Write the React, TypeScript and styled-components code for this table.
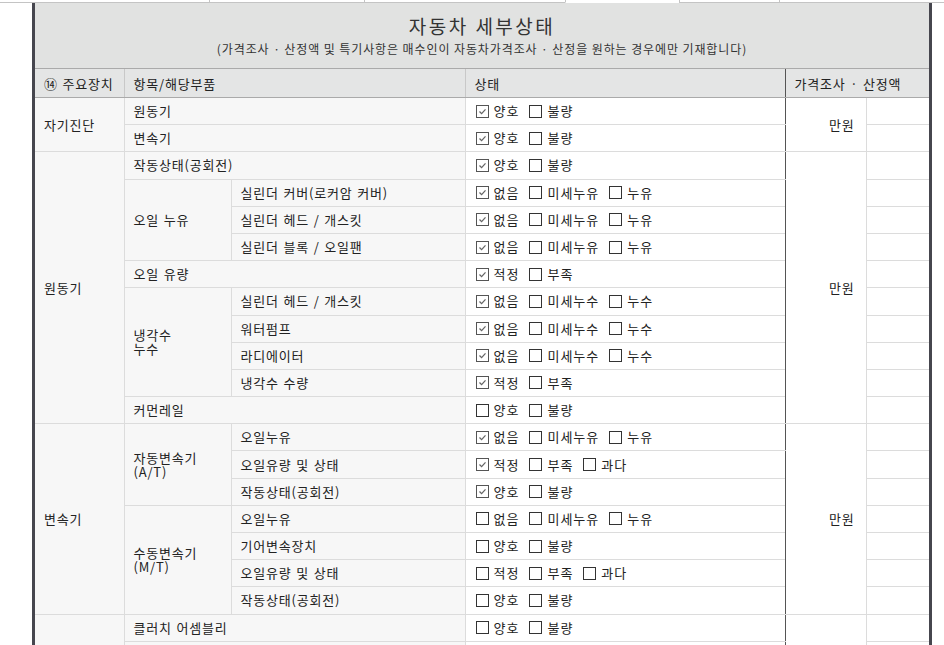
import React from "react";
import styled, { createGlobalStyle } from "styled-components";

const GlobalStyle = createGlobalStyle`
  html, body {
    margin: 0;
    padding: 0;
    background: #fff;
  }
  body {
    font-family: "Noto Sans CJK KR", "Noto Sans", sans-serif;
    color: #222;
  }
`;

type Opt = [string, boolean];
type Row = {
  cat?: { label: string; span: number };
  sub?: { label: React.ReactNode; span: number; full?: boolean };
  item?: string;
  opts: Opt[];
  price?: number;
};

const good = (c: boolean): Opt[] => [["양호", c], ["불량", false]];
const leakOil = (c: boolean): Opt[] => [["없음", c], ["미세누유", false], ["누유", false]];
const leakWater = (c: boolean): Opt[] => [["없음", c], ["미세누수", false], ["누수", false]];
const level = (c: boolean): Opt[] => [["적정", c], ["부족", false]];
const level3 = (c: boolean): Opt[] => [["적정", c], ["부족", false], ["과다", false]];

const rows: Row[] = [
  { cat: { label: "자기진단", span: 2 }, sub: { label: "원동기", span: 1, full: true }, opts: good(true), price: 2 },
  { sub: { label: "변속기", span: 1, full: true }, opts: good(true) },
  { cat: { label: "원동기", span: 10 }, sub: { label: "작동상태(공회전)", span: 1, full: true }, opts: good(true), price: 10 },
  { sub: { label: "오일 누유", span: 3 }, item: "실린더 커버(로커암 커버)", opts: leakOil(true) },
  { item: "실린더 헤드 / 개스킷", opts: leakOil(true) },
  { item: "실린더 블록 / 오일팬", opts: leakOil(true) },
  { sub: { label: "오일 유량", span: 1, full: true }, opts: level(true) },
  { sub: { label: <>냉각수<br />누수</>, span: 4 }, item: "실린더 헤드 / 개스킷", opts: leakWater(true) },
  { item: "워터펌프", opts: leakWater(true) },
  { item: "라디에이터", opts: leakWater(true) },
  { item: "냉각수 수량", opts: level(true) },
  { sub: { label: "커먼레일", span: 1, full: true }, opts: good(false) },
  { cat: { label: "변속기", span: 7 }, sub: { label: <>자동변속기<br />(A/T)</>, span: 3 }, item: "오일누유", opts: leakOil(true), price: 7 },
  { item: "오일유량 및 상태", opts: level3(true) },
  { item: "작동상태(공회전)", opts: good(true) },
  { sub: { label: <>수동변속기<br />(M/T)</>, span: 4 }, item: "오일누유", opts: leakOil(false) },
  { item: "기어변속장치", opts: good(false) },
  { item: "오일유량 및 상태", opts: level3(false) },
  { item: "작동상태(공회전)", opts: good(false) },
  { cat: { label: "동력전달", span: 4 }, sub: { label: "클러치 어셈블리", span: 1, full: true }, opts: good(false), price: 4 },
  { sub: { label: "등속조인트", span: 1, full: true }, opts: good(false) },
  { sub: { label: "추진축 및 베어링", span: 1, full: true }, opts: good(false) },
  { sub: { label: "디퍼렌셜 기어", span: 1, full: true }, opts: good(false) },
];

const tabs = [
  { w: 209 },
  { w: 155 },
  { w: 201 },
  { w: 114, active: true },
  { w: 100 },
  { w: 165 },
];

const Page = styled.div`
  width: 944px;
`;

const TabStrip = styled.div`
  display: flex;
  height: 3px;
`;

const Tab = styled.div<{ $w: number; $active?: boolean }>`
  box-sizing: border-box;
  flex: 0 0 ${(p) => p.$w}px;
  height: 3px;
  border-left: 1px solid #c4c4c4;
  border-bottom: 1px solid ${(p) => (p.$active ? "transparent" : "#c4c4c4")};
  background: #fff;
  &:first-child {
    border-left: none;
  }
`;

const Body = styled.div`
  padding-left: 32px;
`;

const Sheet = styled.div`
  box-sizing: border-box;
  width: 900px;
  border-left: 3px solid #46464e;
  border-right: 3px solid #46464e;
`;

const TitleBox = styled.div`
  height: 65px;
  background: #e1e2e1;
  display: flex;
  flex-direction: column;
  align-items: center;
  justify-content: center;
  gap: 3px;
  color: #333;
`;

const Title = styled.div`
  font-size: 19px;
  letter-spacing: 2.5px;
  line-height: 24px;
`;

const Sub = styled.div`
  font-size: 12px;
  letter-spacing: 0.9px;
  line-height: 16px;
`;

const Table = styled.table`
  width: 100%;
  border-collapse: collapse;
  table-layout: fixed;
  font-size: 13px;
  letter-spacing: 0.8px;
  word-spacing: 1px;
`;

const HeadCell = styled.th<{ $dark?: boolean }>`
  box-sizing: border-box;
  height: 29px;
  padding: 0 0 0 9px;
  background: #e4e5e5;
  text-align: left;
  font-weight: normal;
  color: #222;
  border-top: 1px solid #aaa;
  border-bottom: 1px solid #aaa;
  border-left: 1px solid ${(p) => (p.$dark ? "#555" : "#c8c8c8")};
  &:first-child {
    border-left: none;
  }
`;

const Cell = styled.td<{ $tight?: boolean }>`
  box-sizing: border-box;
  height: 27.2px;
  padding: 0 0 0 9px;
  background: #f7f7f7;
  border: 1px solid #dcdcdc;
  line-height: ${(p) => (p.$tight ? "14px" : "18px")};
  vertical-align: middle;
  white-space: nowrap;
  &:first-child {
    border-left: none;
  }
`;

const StateCell = styled.td`
  box-sizing: border-box;
  height: 27.2px;
  padding: 0 0 0 10px;
  background: #fff;
  border: 1px solid #dcdcdc;
  border-right: 1px solid #555;
`;

const PriceCell = styled.td`
  box-sizing: border-box;
  padding: 0 11px 0 0;
  background: #fff;
  border: 1px solid #dcdcdc;
  border-left: 1px solid #555;
  text-align: right;
  vertical-align: middle;
`;

const BlankCell = styled.td`
  box-sizing: border-box;
  height: 27.2px;
  background: #fff;
  border: 1px solid #dcdcdc;
  border-right: none;
`;

const Opts = styled.div`
  display: flex;
  align-items: center;
  gap: 10px;
  letter-spacing: 1px;
`;

const OptItem = styled.label`
  display: inline-flex;
  align-items: center;
  gap: 5px;
  line-height: 18px;
`;

const Box = styled.span<{ $on: boolean }>`
  box-sizing: border-box;
  display: inline-flex;
  align-items: center;
  justify-content: center;
  width: 13px;
  height: 13px;
  border: 1px solid ${(p) => (p.$on ? "#555" : "#333")};
  background: #fff;
`;

function Check({ on }: { on: boolean }) {
  return (
    <Box $on={on}>
      {on && (
        <svg width="11" height="11" viewBox="0 0 11 11">
          <path d="M2.5 5.5 L4.6 7.6 L8.5 3.4" fill="none" stroke="#666" strokeWidth="1.3" />
        </svg>
      )}
    </Box>
  );
}

export default function App() {
  return (
    <Page>
      <GlobalStyle />
      <TabStrip>
        {tabs.map((t, i) => (
          <Tab key={i} $w={t.w} $active={t.active} />
        ))}
      </TabStrip>
      <Body>
        <Sheet>
          <TitleBox>
            <Title>자동차 세부상태</Title>
            <Sub>(가격조사 · 산정액 및 특기사항은 매수인이 자동차가격조사 · 산정을 원하는 경우에만 기재합니다)</Sub>
          </TitleBox>
          <Table>
            <colgroup>
              <col style={{ width: 89 }} />
              <col style={{ width: 107 }} />
              <col style={{ width: 234 }} />
              <col style={{ width: 320 }} />
              <col style={{ width: 81 }} />
              <col style={{ width: 63 }} />
            </colgroup>
            <thead>
              <tr>
                <HeadCell>⑭ 주요장치</HeadCell>
                <HeadCell colSpan={2}>항목/해당부품</HeadCell>
                <HeadCell>상태</HeadCell>
                <HeadCell colSpan={2} $dark>가격조사 · 산정액</HeadCell>
              </tr>
            </thead>
            <tbody>
              {rows.map((r, i) => (
                <tr key={i}>
                  {r.cat && <Cell rowSpan={r.cat.span}>{r.cat.label}</Cell>}
                  {r.sub && (
                    <Cell rowSpan={r.sub.span} colSpan={r.sub.full ? 2 : 1} $tight={r.sub.span > 1}>
                      {r.sub.label}
                    </Cell>
                  )}
                  {r.item && <Cell>{r.item}</Cell>}
                  <StateCell>
                    <Opts>
                      {r.opts.map(([label, on]) => (
                        <OptItem key={label}>
                          <Check on={on} />
                          {label}
                        </OptItem>
                      ))}
                    </Opts>
                  </StateCell>
                  {r.price && <PriceCell rowSpan={r.price}>만원</PriceCell>}
                  <BlankCell />
                </tr>
              ))}
            </tbody>
          </Table>
        </Sheet>
      </Body>
    </Page>
  );
}
